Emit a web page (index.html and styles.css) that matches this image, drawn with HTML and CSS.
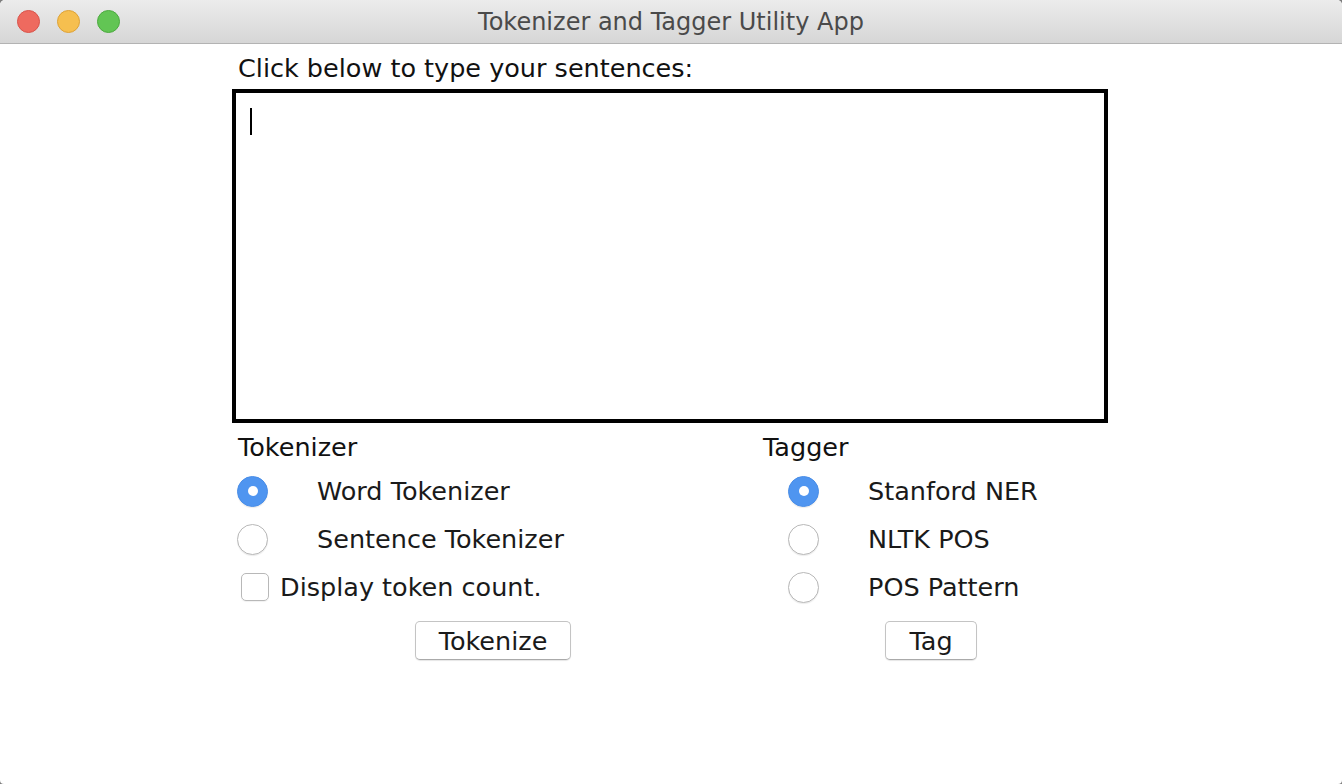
FILE: index.html
```html
<!DOCTYPE html>
<html>
<head>
<meta charset="utf-8">
<link rel="stylesheet" href="styles.css">
</head>
<body>
<div class="window">
  <div class="titlebar">
    <div class="lights">
      <span class="light red"></span>
      <span class="light yellow"></span>
      <span class="light green"></span>
    </div>
    <div class="title">Tokenizer and Tagger Utility App</div>
  </div>
  <div class="content">
    <div class="prompt">Click below to type your sentences:</div>
    <div class="textbox"><span class="caret"></span></div>
    <div class="panels">
      <div class="panel left">
        <div class="heading">Tokenizer</div>
        <div class="row"><span class="radio on"></span><span class="label">Word Tokenizer</span></div>
        <div class="row"><span class="radio"></span><span class="label">Sentence Tokenizer</span></div>
        <div class="row check"><span class="checkbox"></span><span class="label">Display token count.</span></div>
        <div class="btnrow"><span class="button tokenize">Tokenize</span></div>
      </div>
      <div class="panel right">
        <div class="heading">Tagger</div>
        <div class="row"><span class="radio on"></span><span class="label">Stanford NER</span></div>
        <div class="row"><span class="radio"></span><span class="label">NLTK POS</span></div>
        <div class="row"><span class="radio"></span><span class="label">POS Pattern</span></div>
        <div class="btnrow"><span class="button tag">Tag</span></div>
      </div>
    </div>
  </div>
</div>
</body>
</html>
```
FILE: styles.css
```css
html, body {
  margin: 0;
  padding: 0;
  background: #7d7d7d;
}
body {
  width: 1342px;
  height: 784px;
  overflow: hidden;
  font-family: "DejaVu Sans", "Liberation Sans", sans-serif;
  color: #1a1a1a;
}
.window {
  width: 1342px;
  height: 784px;
  background: #ffffff;
  border-radius: 5px 5px 4px 4px;
  overflow: hidden;
}
.titlebar {
  height: 43px;
  border-bottom: 1px solid #b3b3b3;
  background: linear-gradient(#ececec, #d6d6d6);
  display: flex;
  align-items: center;
  position: relative;
}
.lights {
  display: flex;
  gap: 17px;
  padding-left: 17px;
}
.light {
  width: 23px;
  height: 23px;
  border-radius: 50%;
  box-sizing: border-box;
}
.red { background: #ee6a5f; border: 1px solid #d9534a; }
.yellow { background: #f6bf4f; border: 1px solid #dea236; }
.green { background: #62c554; border: 1px solid #4caa3f; }
.title {
  position: absolute;
  left: 0;
  right: 0;
  top: 0;
  line-height: 45px;
  text-align: center;
  font-size: 24px;
  color: #4a4a4a;
}
.content {
  padding-left: 232px;
}
.prompt {
  font-size: 25.5px;
  color: #111;
  padding-left: 6px;
  margin-top: 9px;
  height: 36px;
  line-height: 30px;
}
.textbox {
  width: 868px;
  height: 326px;
  border: 4px solid #000;
  position: relative;
}
.caret {
  position: absolute;
  left: 14px;
  top: 15px;
  width: 2px;
  height: 27px;
  background: #000;
}
.panels {
  display: grid;
  grid-template-columns: 525px 300px;
  padding-left: 6px;
  margin-top: 4px;
}
.heading {
  font-size: 25.5px;
  height: 40px;
  line-height: 40px;
  color: #111;
}
.row {
  display: flex;
  align-items: center;
  height: 48px;
  font-size: 25.5px;
}
.radio {
  width: 31px;
  height: 31px;
  border-radius: 50%;
  box-sizing: border-box;
  border: 1px solid #b8b8b8;
  background: #fff;
  box-shadow: 0 1px 1px rgba(0,0,0,0.08);
  display: inline-flex;
  align-items: center;
  justify-content: center;
  flex: none;
}
.radio.on {
  background: #4f95f0;
  border-color: #4a8ee8;
}
.radio.on::after {
  content: "";
  width: 10px;
  height: 10px;
  border-radius: 50%;
  background: #fff;
}
.left .radio { margin-left: -1px; }
.left .radio + .label { margin-left: 49px; }
.right .row { padding-left: 25px; }
.right .radio + .label { margin-left: 49px; }
.check .checkbox {
  width: 28px;
  height: 28px;
  box-sizing: border-box;
  border: 1px solid #b8b8b8;
  border-radius: 5px;
  margin-left: 3px;
  box-shadow: 0 1px 1px rgba(0,0,0,0.06);
  flex: none;
}
.check .label { margin-left: 11px; }
.btnrow {
  margin-top: 10px;
  display: flex;
}
.button {
  height: 39px;
  box-sizing: border-box;
  border: 1px solid #c4c4c4;
  border-bottom-color: #aaa;
  border-radius: 5px;
  background: #fff;
  font-size: 25.5px;
  display: flex;
  align-items: center;
  justify-content: center;
  box-shadow: 0 1px 1px rgba(0,0,0,0.1);
}
.tokenize { width: 156px; margin-left: 177px; }
.tag { width: 92px; margin-left: 122px; }
```
